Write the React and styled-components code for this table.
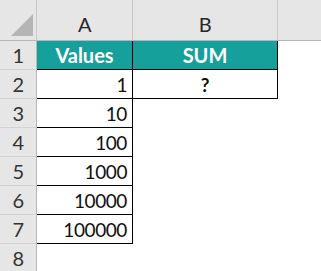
import React from "react";
import styled, { createGlobalStyle } from "styled-components";

const GlobalStyle = createGlobalStyle`
  html, body {
    margin: 0;
    padding: 0;
    background: #fff;
    overflow: hidden;
  }
  body {
    font-family: Lato, "Open Sans", sans-serif;
  }
`;

const values = [1, 10, 100, 1000, 10000, 100000];

const App = () => {
  return (
    <>
      <GlobalStyle />
      <Sheet>
        <Corner>
          <CornerTriangle viewBox="0 0 22 22">
            <polygon points="0,22 22,22 22,0" fill="#b5b5b5" />
          </CornerTriangle>
        </Corner>
        <ColHead>A</ColHead>
        <ColHead>B</ColHead>
        <ColHead $last />

        <RowHead>1</RowHead>
        <Title>Values</Title>
        <Title>SUM</Title>
        <Empty />

        <RowHead>2</RowHead>
        <Num>{values[0]}</Num>
        <Mark>?</Mark>
        <Empty />

        {values.slice(1).map((v, i) => (
          <React.Fragment key={v}>
            <RowHead>{i + 3}</RowHead>
            <Num>{v}</Num>
            <Empty />
            <Empty />
          </React.Fragment>
        ))}

        <RowHead>8</RowHead>
        <Empty />
        <Empty />
        <Empty />
      </Sheet>
    </>
  );
};

export default App;

const Sheet = styled.div`
  display: grid;
  grid-template-columns: 37px 96px 145px 1fr;
  grid-template-rows: 41px repeat(8, 29px);
  width: 321px;
  height: 271px;
  overflow: hidden;
  font-size: 19px;
  letter-spacing: -0.4px;
`;

const Corner = styled.div`
  position: relative;
  background: #e6e6e6;
  border-right: 1px solid #c9c9c9;
  border-bottom: 1px solid #b8b8b8;
`;

const CornerTriangle = styled.svg`
  position: absolute;
  right: 3px;
  bottom: 4px;
  width: 22px;
  height: 22px;
`;

const ColHead = styled.div`
  display: flex;
  align-items: flex-end;
  justify-content: center;
  padding-bottom: 4px;
  background: #e6e6e6;
  color: #262626;
  font-size: 20px;
  border-right: ${(p) => (p.$last ? "none" : "1px solid #c9c9c9")};
  border-bottom: 1px solid #b8b8b8;
  box-sizing: border-box;
`;

const RowHead = styled.div`
  display: flex;
  align-items: center;
  justify-content: center;
  background: #e6e6e6;
  color: #333;
  font-size: 20px;
  border-right: 1px solid #b8b8b8;
  border-bottom: 1px solid #d2d2d2;
  box-sizing: border-box;
`;

const Title = styled.div`
  display: flex;
  align-items: center;
  justify-content: center;
  background: #16a09b;
  color: #fff;
  font-size: 20px;
  font-weight: 700;
  letter-spacing: 0;
  border-right: 1px solid #000;
  border-bottom: 1px solid #000;
  box-sizing: border-box;
`;

const Num = styled.div`
  display: flex;
  align-items: center;
  justify-content: flex-end;
  padding-right: 5px;
  color: #111;
  border-right: 1px solid #000;
  border-bottom: 1px solid #000;
  box-sizing: border-box;
`;

const Mark = styled.div`
  display: flex;
  align-items: center;
  justify-content: center;
  font-weight: 700;
  color: #111;
  border-right: 1px solid #000;
  border-bottom: 1px solid #000;
  box-sizing: border-box;
`;

const Empty = styled.div`
  background: #fff;
`;
